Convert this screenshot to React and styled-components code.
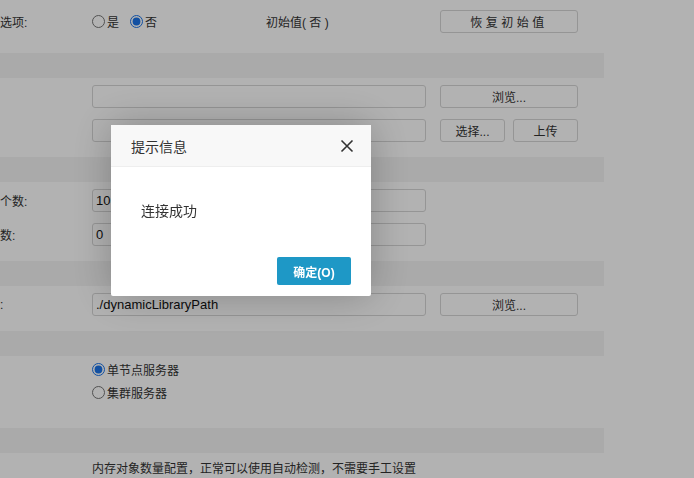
import React from "react";
import styled, { createGlobalStyle } from "styled-components";

const GlobalStyle = createGlobalStyle`
    html, body {
        margin: 0;
        padding: 0;
        background: #fff;
        overflow: hidden;
    }
    body {
        font-family: "Liberation Sans", "Noto Sans CJK SC", sans-serif;
        font-size: 12px;
        color: #333;
    }
`;

const Page = styled.div`
    width: 604px;
    height: 478px;
    overflow: hidden;
`;

const SectionBar = styled.div`
    height: 25px;
    background: #f4f4f4;
`;

const SectionBody = styled.div`
    display: flex;
    flex-direction: column;
    gap: 11px;
    padding: ${(p) => p.$top ?? 7}px 0 ${(p) => p.$bottom ?? 15}px;
`;

const Row = styled.div`
    display: grid;
    grid-template-columns: 78px 334px 138px;
    column-gap: 14px;
    align-items: center;
    min-height: 23px;
`;

const Label = styled.div`
    white-space: nowrap;
    overflow: hidden;
`;

const Input = styled.div`
    box-sizing: border-box;
    height: 23px;
    border: 1px solid #d6d6d6;
    border-radius: 3px;
    background: #fff;
    padding: 0 3px;
    display: flex;
    align-items: center;
    font-size: 13px;
    color: #111;
`;

const Actions = styled.div`
    display: flex;
    gap: 8px;
`;

const Button = styled.button`
    flex: 1;
    box-sizing: border-box;
    height: 23px;
    border: 1px solid #d6d6d6;
    border-radius: 3px;
    background: #fff;
    font-family: inherit;
    font-size: 12px;
    color: #333;
    letter-spacing: ${(p) => p.$spaced ? "3.5px" : "0"};
    padding: 0;
`;

const OptionField = styled.div`
    display: grid;
    grid-template-columns: 174px auto;
    align-items: center;
`;

const RadioGroup = styled.div`
    display: flex;
    flex-direction: ${(p) => p.$column ? "column" : "row"};
    gap: ${(p) => p.$column ? "0" : "11px"};
`;

const RadioLabel = styled.label`
    display: flex;
    align-items: center;
    gap: 2px;
    height: 23px;
    white-space: nowrap;

    input {
        margin: 0;
        width: 13px;
        height: 13px;
        accent-color: #1a73e8;
    }
`;

const Note = styled.div`
    padding-left: 92px;
    height: 25px;
    line-height: 32px;
    white-space: nowrap;
`;

const Mask = styled.div`
    position: fixed;
    inset: 0;
    background: rgba(0, 0, 0, 0.3);
`;

const Dialog = styled.div`
    position: fixed;
    left: 111px;
    top: 125px;
    width: 260px;
    height: 171px;
    background: #fff;
    border-radius: 2px;
    box-shadow: 0 0 40px rgba(0, 0, 0, 0.25);
    display: flex;
    flex-direction: column;
    font-family: "Liberation Sans", "Noto Sans CJK SC", sans-serif;
`;

const DialogHeader = styled.div`
    height: 42px;
    box-sizing: border-box;
    background: #f8f8f8;
    border-bottom: 1px solid #eee;
    display: flex;
    align-items: center;
    justify-content: space-between;
    padding: 0 17px 0 20px;
    font-size: 14px;
    color: #333;
`;

const CloseIcon = styled.svg`
    width: 14px;
    height: 14px;
    display: block;
`;

const DialogBody = styled.div`
    flex: 1;
    padding: 33px 30px 0;
    font-size: 14px;
    color: #333;
`;

const DialogFooter = styled.div`
    display: flex;
    justify-content: flex-end;
    padding: 0 20px 11px;
`;

const PrimaryButton = styled.button`
    width: 74px;
    height: 28px;
    border: none;
    border-radius: 2px;
    background: #1e98c6;
    color: #fff;
    font-family: inherit;
    font-size: 12px;
    font-weight: bold;
`;

const App = () => {
    return (
        <>
            <GlobalStyle />
            <Page>
                <SectionBody $top={10} $bottom={20}>
                    <Row>
                        <Label>选项:</Label>
                        <OptionField>
                            <RadioGroup>
                                <RadioLabel><input type="radio" name="opt" />是</RadioLabel>
                                <RadioLabel><input type="radio" name="opt" defaultChecked />否</RadioLabel>
                            </RadioGroup>
                            <span>初始值( 否 )</span>
                        </OptionField>
                        <Actions><Button $spaced>恢复初始值</Button></Actions>
                    </Row>
                </SectionBody>
                <SectionBar />
                <SectionBody>
                    <Row>
                        <Label />
                        <Input />
                        <Actions><Button>浏览...</Button></Actions>
                    </Row>
                    <Row>
                        <Label />
                        <Input />
                        <Actions><Button>选择...</Button><Button>上传</Button></Actions>
                    </Row>
                </SectionBody>
                <SectionBar />
                <SectionBody>
                    <Row>
                        <Label>个数:</Label>
                        <Input>10</Input>
                    </Row>
                    <Row>
                        <Label>数:</Label>
                        <Input>0</Input>
                    </Row>
                </SectionBody>
                <SectionBar />
                <SectionBody>
                    <Row>
                        <Label>:</Label>
                        <Input>./dynamicLibraryPath</Input>
                        <Actions><Button>浏览...</Button></Actions>
                    </Row>
                </SectionBody>
                <SectionBar />
                <SectionBody $top={2} $bottom={24}>
                    <Row>
                        <Label />
                        <RadioGroup $column>
                            <RadioLabel><input type="radio" name="mode" defaultChecked />单节点服务器</RadioLabel>
                            <RadioLabel><input type="radio" name="mode" />集群服务器</RadioLabel>
                        </RadioGroup>
                    </Row>
                </SectionBody>
                <SectionBar />
                <Note>内存对象数量配置，正常可以使用自动检测，不需要手工设置</Note>
            </Page>
            <Mask />
            <Dialog>
                <DialogHeader>
                    <span>提示信息</span>
                    <CloseIcon viewBox="0 0 14 14">
                        <path d="M1.5 1.5 L12.5 12.5 M12.5 1.5 L1.5 12.5" stroke="#333" strokeWidth="1.6" fill="none" />
                    </CloseIcon>
                </DialogHeader>
                <DialogBody>连接成功</DialogBody>
                <DialogFooter>
                    <PrimaryButton>确定(O)</PrimaryButton>
                </DialogFooter>
            </Dialog>
        </>
    );
};

export default App;
